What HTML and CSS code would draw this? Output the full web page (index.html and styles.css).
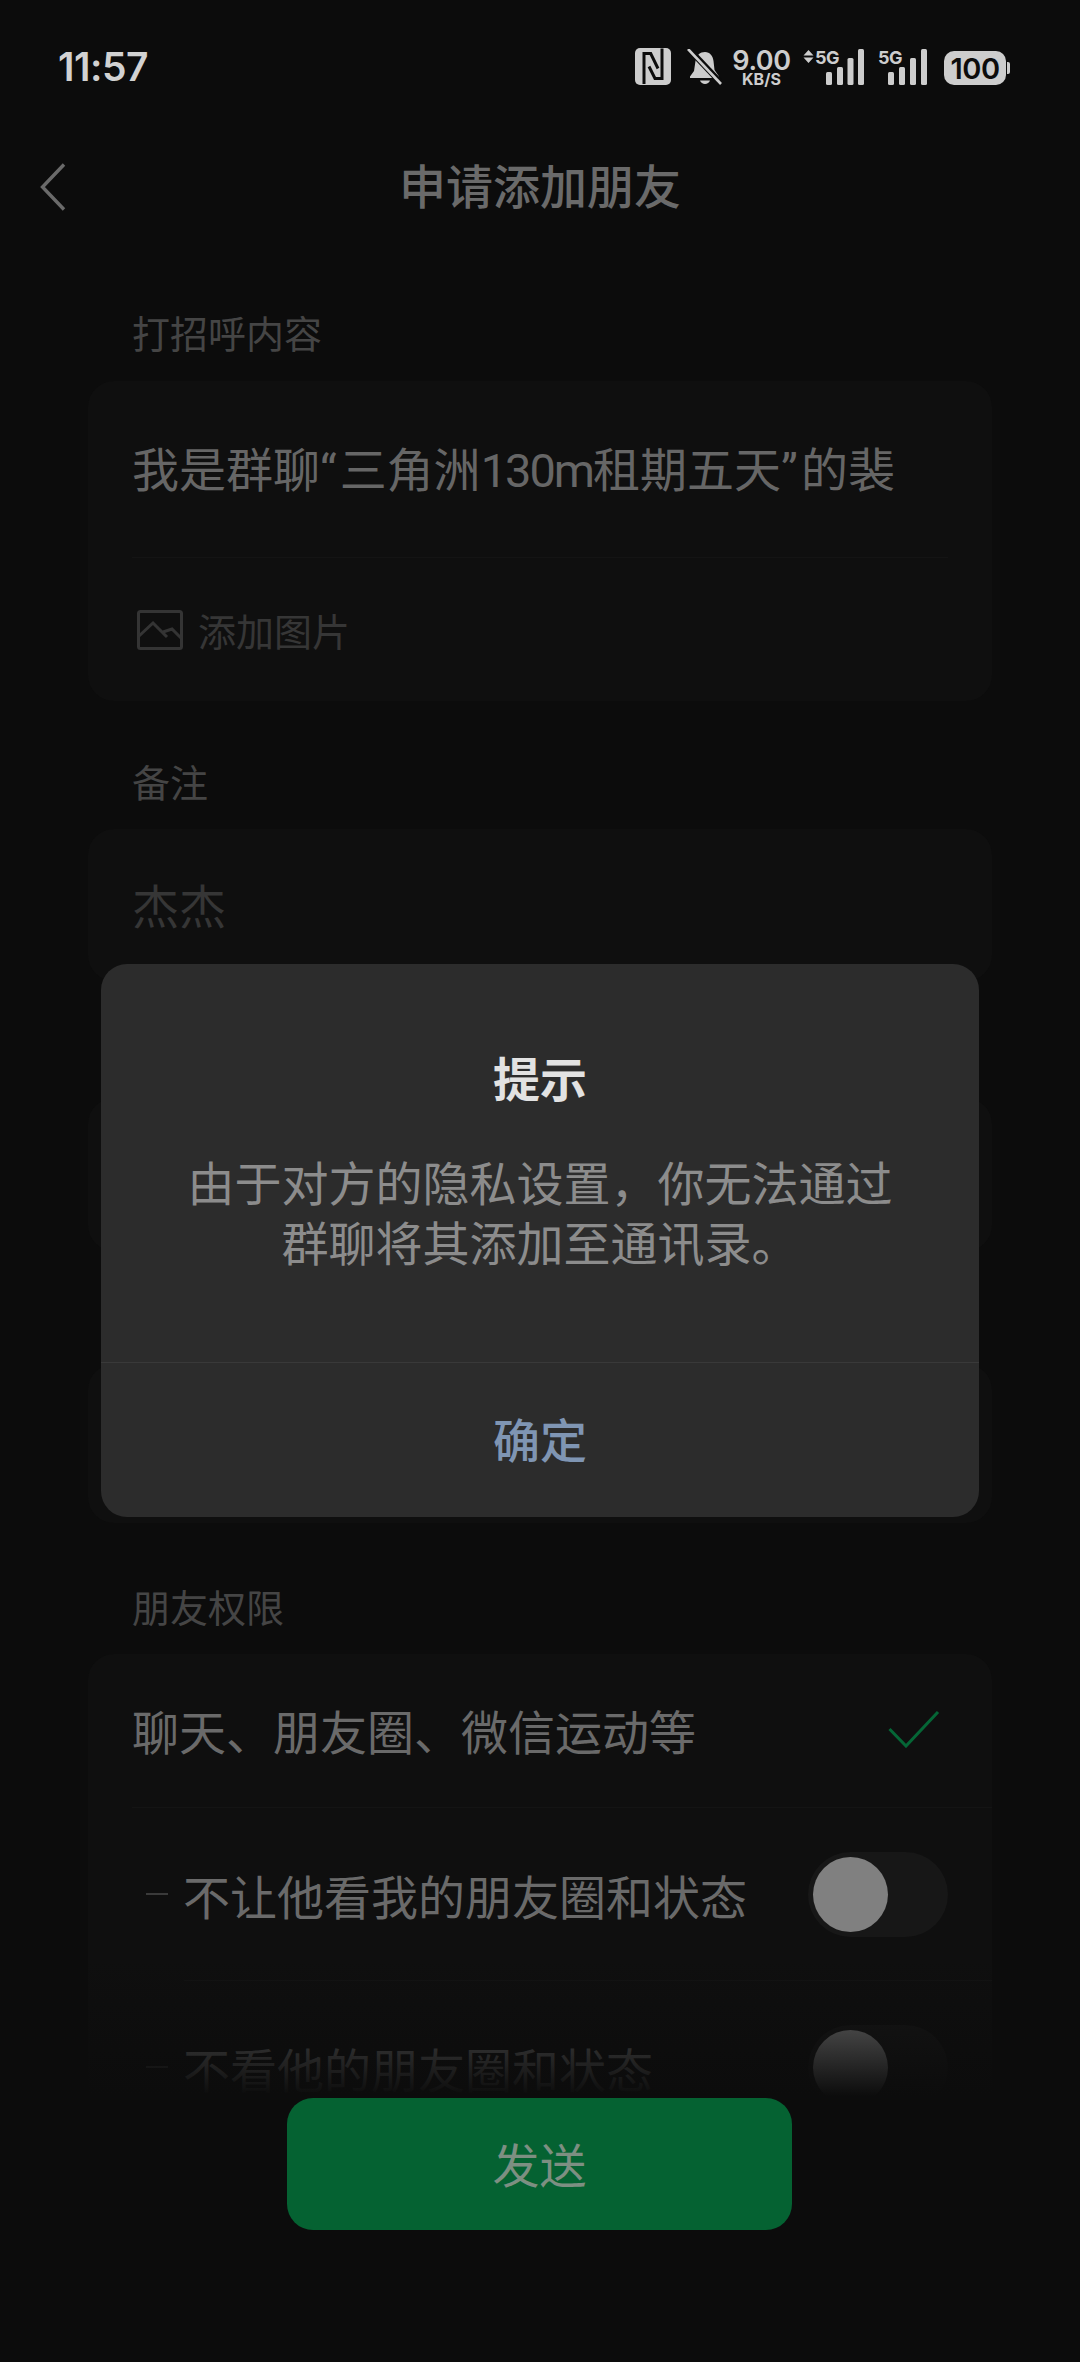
FILE: index.html
```html
<!DOCTYPE html>
<html lang="zh-CN">

<head>
    <meta charset="utf-8">
    <title>申请添加朋友</title>
    <link rel="stylesheet" href="styles.css">
</head>

<body>
    <div class="page">
        <div class="status">
            <span class="time">11:57</span>
            <div class="status-icons">
                <svg class="ic-nfc" width="36" height="37" viewBox="0 0 36 37">
                    <rect width="36" height="37" rx="5" fill="#cdcdcd" />
                    <path d="M9 36V5.5h6.700L23 20.500M27 .5v30h-7l-6-12" fill="none" stroke="#0c0c0c" stroke-width="3" />
                </svg>
                <svg class="ic-bell" width="35" height="36" viewBox="0 0 35 36">
                    <path d="M18 3c5 0 8 4 8.500 9l1 9 4.500 6.500v1.500H3v-1.500l4-5.500 1.500-10C9.500 6 13 3 18 3z" fill="#cdcdcd" />
                    <path d="M13 31.500h10c-.8 2.300-2.700 3.500-5 3.500s-4.200-1.200-5-3.500z" fill="#cdcdcd" />
                    <path d="M-1 -3L35 35" stroke="#0c0c0c" stroke-width="6" />
                    <path d="M1 0L34 35" stroke="#cdcdcd" stroke-width="2.600" />
                </svg>
                <div class="speed">
                    <span class="speed-num">9.00</span>
                    <span class="speed-unit">KB/S</span>
                </div>
                <svg class="ic-sig-a" width="61" height="36" viewBox="0 0 61 36">
                    <path d="M5.500 1L10.500 6.500H.5zM5.500 14L10.500 8.500H.5z" fill="#cdcdcd" />
                    <text x="12" y="14.500" class="sig-label">5G</text>
                    <rect x="23" y="23" width="6" height="13" rx="1.500" fill="#cdcdcd" />
                    <rect x="34" y="18" width="6" height="18" rx="1.500" fill="#cdcdcd" />
                    <rect x="44.500" y="9" width="6" height="27" rx="1.500" fill="#cdcdcd" />
                    <rect x="55" y="0" width="6" height="36" rx="1.500" fill="#cdcdcd" />
                </svg>
                <svg class="ic-sig-b" width="48" height="36" viewBox="0 0 48 36">
                    <text x="-1" y="14.500" class="sig-label">5G</text>
                    <rect x="9" y="23" width="6" height="13" rx="1.500" fill="#cdcdcd" />
                    <rect x="20" y="18" width="6" height="18" rx="1.500" fill="#cdcdcd" />
                    <rect x="31" y="9" width="6" height="27" rx="1.500" fill="#cdcdcd" />
                    <rect x="42" y="0" width="6" height="36" rx="1.500" fill="#cdcdcd" />
                </svg>
                <div class="battery"><span class="battery-num">100</span></div>
            </div>
        </div>

        <div class="nav">
            <svg class="back" width="26" height="48" viewBox="0 0 26 48">
                <path d="M24 1.500L2.500 24L24 46.500" fill="none" stroke="#6a6a6a" stroke-width="3.400" />
            </svg>
            <h1 class="nav-title">申请添加朋友</h1>
        </div>

        <div class="label">打招呼内容</div>
        <div class="card">
            <div class="row row-greet"><span>我是群聊<span class="quote">“</span>三角洲<span class="num">130m</span>租期五天<span class="quote">”</span>的裴</span></div>
            <div class="rule rule-inset"></div>
            <div class="row row-pic">
                <svg width="46" height="40" viewBox="0 0 46 40">
                    <rect x="1.500" y="1.500" width="43" height="37" rx="2" fill="none" stroke="#343434" stroke-width="3" />
                    <path d="M2 26L16 13L30 27M26 22L35 19L44 28" fill="none" stroke="#343434" stroke-width="3" />
                </svg>
                <span>添加图片</span>
            </div>
        </div>

        <div class="label label-next">备注</div>
        <div class="card">
            <div class="row row-remark">杰杰</div>
        </div>

        <!-- these two sit behind the dialog -->
        <div class="card card-mid"></div>
        <div class="card card-low"></div>

        <div class="label label-perm">朋友权限</div>
        <div class="card">
            <div class="row row-perm">
                <span>聊天、朋友圈、微信运动等</span>
                <svg width="52" height="37" viewBox="0 0 52 37">
                    <path d="M1.500 18L18 35L50 1" fill="none" stroke="#056636" stroke-width="3" />
                </svg>
            </div>
            <div class="rule rule-first"></div>
            <div class="row row-sub">
                <i class="dash"></i>
                <span class="sub-text">不让他看我的朋友圈和状态</span>
                <div class="toggle"><i class="knob"></i></div>
            </div>
            <div class="rule rule-sub"></div>
            <div class="row row-sub">
                <i class="dash"></i>
                <span class="sub-text">不看他的朋友圈和状态</span>
                <div class="toggle"><i class="knob"></i></div>
            </div>
        </div>

        <div class="footer">
            <div class="send">发送</div>
        </div>

        <div class="dialog-layer">
            <div class="dialog">
                <div class="dialog-main">
                    <h2 class="dialog-title">提示</h2>
                    <p class="dialog-text">由于对方的隐私设置，你无法通过<br>群聊将其添加至通讯录。</p>
                </div>
                <div class="dialog-ok">确定</div>
            </div>
        </div>
    </div>
</body>

</html>
```

FILE: styles.css
```css
body,
html {
    margin: 0;
    background: #0c0c0c;
}

.page {
    position: relative;
    width: 1080px;
    height: 2362px;
    overflow: hidden;
    font-family: Roboto, "Noto Sans CJK SC", sans-serif;
    color: #6a6a6a;
}

/* status bar */
.status {
    height: 134px;
    display: flex;
    justify-content: space-between;
    align-items: flex-start;
    padding: 0 74px 0 58px;
    box-sizing: border-box;
}

.time {
    margin-top: 43px;
    font-family: Inter, sans-serif;
    font-weight: 600;
    font-size: 39px;
    line-height: 48px;
    letter-spacing: -0.5px;
    color: #d2d2d2;
}

.status-icons {
    display: flex;
    align-items: flex-start;
    margin-top: 48px;
}

.ic-nfc {
    margin-right: 16px;
}

.ic-bell {
    margin-right: 10px;
    margin-top: 1px;
}

.speed {
    width: 59px;
    margin-right: 12px;
    display: flex;
    flex-direction: column;
    align-items: center;
    font-family: Inter, sans-serif;
    color: #cdcdcd;
}

.speed-num {
    font-size: 27px;
    line-height: 25px;
    font-weight: 600;
    letter-spacing: -0.4px;
}

.speed-unit {
    font-size: 16px;
    line-height: 12px;
    font-weight: 700;
}

.ic-sig-a {
    margin-right: 15px;
    margin-top: 1px;
    overflow: visible;
}

.ic-sig-b {
    margin-right: 17px;
    margin-top: 1px;
    overflow: visible;
}

.sig-label {
    font-family: Inter, sans-serif;
    font-size: 18px;
    font-weight: 700;
    letter-spacing: -0.5px;
    fill: #cdcdcd;
}

.battery {
    position: relative;
    width: 62px;
    height: 34px;
    margin-top: 3px;
    border-radius: 10px;
    background: #cdcdcd;
    display: flex;
    justify-content: center;
    align-items: center;
}

.battery:after {
    content: "";
    position: absolute;
    left: 63px;
    top: 11px;
    width: 3px;
    height: 12px;
    border-radius: 0 2px 2px 0;
    background: #cdcdcd;
}

.battery-num {
    font-family: Inter, sans-serif;
    font-size: 29px;
    font-weight: 600;
    letter-spacing: -0.5px;
    color: #0c0c0c;
}

/* title bar */
.nav {
    position: relative;
    height: 108px;
    display: flex;
    align-items: center;
    justify-content: center;
}

.back {
    position: absolute;
    left: 40px;
    top: 29px;
}

.nav-title {
    margin: 0;
    font-size: 47px;
    font-weight: 500;
    line-height: 60px;
    color: #6a6a6a;
}

/* form sections */
.label {
    margin: 67px 0 20px 132px;
    font-size: 38px;
    line-height: 52px;
    height: 52px;
    color: #454545;
}

.label-next {
    margin-top: 56px;
    line-height: 54px;
}

.label-perm {
    margin-top: 59px;
    line-height: 54px;
}

.card {
    width: 904px;
    margin-left: 88px;
    border-radius: 26px;
    background: #0f0f0f;
}

.card-mid {
    height: 153px;
    margin-top: 117px;
}

.card-low {
    height: 159px;
    margin-top: 113px;
}

.row {
    display: flex;
    align-items: center;
    box-sizing: border-box;
    font-size: 47px;
}

.row-greet {
    height: 176px;
    padding: 0 0 6px 44px;
    color: #666666;
}

.quote {
    margin-right: 3px;
}

.num {
    letter-spacing: -2px;
}

.row-pic {
    height: 143px;
    padding-left: 49px;
    gap: 15px;
    font-size: 38px;
    color: #363636;
}

.row-remark {
    height: 152px;
    padding: 0 0 3px 44px;
    color: #363636;
}

.row-perm {
    height: 153px;
    padding: 0 52px 2px 44px;
    justify-content: space-between;
}

.row-sub {
    height: 172px;
    padding: 0 44px 0 58px;
}

.rule {
    height: 1px;
    background: #141414;
}

.rule-inset {
    margin: 0 44px;
}

.rule-first {
    margin-left: 44px;
}

.rule-sub {
    margin-left: 96px;
}

.dash {
    width: 22px;
    height: 2px;
    margin-right: 15px;
    background: #3a3a3a;
}

.sub-text {
    flex: 1;
}

.toggle {
    width: 140px;
    height: 85px;
    padding: 5px;
    box-sizing: border-box;
    border-radius: 43px;
    background: #171717;
}

.knob {
    display: block;
    width: 75px;
    height: 75px;
    border-radius: 50%;
    background: #808080;
}

/* bottom bar fades the list out under the button */
.footer {
    position: absolute;
    left: 0;
    right: 1px;
    bottom: 0;
    height: 404px;
    padding-top: 140px;
    box-sizing: border-box;
    display: flex;
    flex-direction: column;
    align-items: center;
    background: linear-gradient(rgba(12, 12, 12, 0), #0c0c0c 138px);
}

.send {
    width: 505px;
    height: 132px;
    padding-bottom: 3px;
    box-sizing: border-box;
    border-radius: 26px;
    background: #056232;
    display: flex;
    align-items: center;
    justify-content: center;
    font-size: 47px;
    color: #7d8f82;
}

/* dialog */
.dialog-layer {
    position: absolute;
    left: 0;
    right: 0;
    top: 964px;
    display: flex;
    justify-content: center;
}

.dialog {
    width: 878px;
    height: 553px;
    border-radius: 26px;
    background: #2c2c2c;
    display: flex;
    flex-direction: column;
    text-align: center;
}

.dialog-main {
    height: 399px;
    padding-top: 87px;
    box-sizing: border-box;
    border-bottom: 1px solid #393939;
}

.dialog-title {
    margin: 0;
    font-size: 47px;
    line-height: 60px;
    font-weight: 700;
    color: #e2e2e2;
}

.dialog-text {
    margin: 44px 0 0;
    font-size: 47px;
    line-height: 60px;
    color: #8c8c8c;
}

.dialog-ok {
    flex: 1;
    padding-bottom: 5px;
    display: flex;
    align-items: center;
    justify-content: center;
    font-size: 47px;
    font-weight: 500;
    color: #7f95b3;
}
```
